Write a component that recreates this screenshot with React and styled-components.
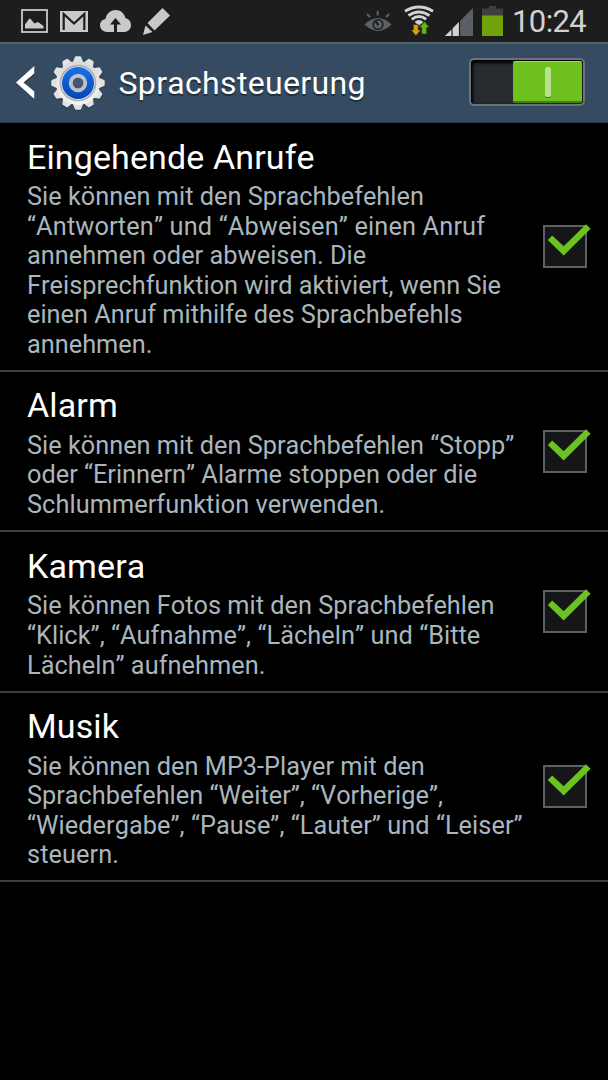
import React, { useState } from "react";
import styled, { createGlobalStyle } from "styled-components";

const settings = [
  {
    title: "Eingehende Anrufe",
    lines: [
      { text: "Sie können mit den Sprachbefehlen" },
      { text: "“Antworten” und “Abweisen” einen Anruf", tracking: 0.16 },
      { text: "annehmen oder abweisen. Die", tracking: 0.05 },
      { text: "Freisprechfunktion wird aktiviert, wenn Sie" },
      { text: "einen Anruf mithilfe des Sprachbefehls" },
      { text: "annehmen." },
    ],
    height: 249,
  },
  {
    title: "Alarm",
    lines: [
      { text: "Sie können mit den Sprachbefehlen “Stopp”" },
      { text: "oder “Erinnern” Alarme stoppen oder die" },
      { text: "Schlummerfunktion verwenden.", tracking: 0.07 },
    ],
    height: 160,
  },
  {
    title: "Kamera",
    lines: [
      { text: "Sie können Fotos mit den Sprachbefehlen" },
      { text: "“Klick”, “Aufnahme”, “Lächeln” und “Bitte", tracking: 0.06 },
      { text: "Lächeln” aufnehmen.", tracking: 0.05 },
    ],
    height: 161,
  },
  {
    title: "Musik",
    lines: [
      { text: "Sie können den MP3-Player mit den" },
      { text: "Sprachbefehlen “Weiter”, “Vorherige”," },
      { text: "“Wiedergabe”, “Pause”, “Lauter” und “Leiser”", tracking: 0.06 },
      { text: "steuern.", tracking: 0.1 },
    ],
    height: 189,
  },
];

const PictureIcon = () => (
  <svg width="27" height="24" viewBox="0 0 27 24">
    <rect x="1" y="1" width="25" height="22" fill="none" stroke="#c9c9c9" strokeWidth="1.8" />
    <path
      d="M4 19.500V15.500L8 10Q9 9 10 10.500L13.500 14.500L17 13L22.500 17V19.500Z"
      fill="#c9c9c9"
    />
  </svg>
);

const MailIcon = () => (
  <svg width="28" height="21" viewBox="0 0 28 21">
    <rect width="28" height="21" fill="#c9c9c9" />
    <path d="M3.700 19V3L14 12.500L24.300 3V19" fill="none" stroke="#1d1d1d" strokeWidth="2.200" />
  </svg>
);

const CloudIcon = () => (
  <svg width="31" height="22" viewBox="0 0 31 22">
    <path
      d="M7.500 22C3 22 0 19 0 15.300C0 12 2.300 9.500 5.500 9C6.500 3.500 10.500 0 15.500 0C20.500 0 24.500 3.500 25.300 8C28.800 9 31 11.600 31 15C31 19 28 22 24 22Z"
      fill="#c9c9c9"
    />
    <path d="M15.500 8L21 14.500H17V22H14V14.500H10Z" fill="#1d1d1d" />
  </svg>
);

const PencilIcon = () => (
  <svg width="27" height="27" viewBox="0 0 27 27">
    <path d="M19.500 0L27 7.500L11.500 22.500L4.500 15Z" fill="#c9c9c9" />
    <path d="M2.500 17.500L9.500 24L0 27Z" fill="#c9c9c9" />
  </svg>
);

const EyeIcon = () => (
  <svg width="28" height="21" viewBox="0 0 28 21">
    <path d="M0.500 13.500Q14 0.500 27.500 13.500Q14 26.500 0.500 13.500Z" fill="#5b6167" />
    <circle cx="14" cy="13.500" r="4.800" fill="#5b6167" stroke="#1d1d1d" strokeWidth="1.600" />
    <path d="M14.500 14L11.500 10.500" stroke="#1d1d1d" strokeWidth="2.200" />
    <path d="M3 3L6 6M13.700 0V4.500M25 3L22 6" stroke="#5b6167" strokeWidth="2" />
  </svg>
);

const WifiIcon = () => (
  <svg width="30" height="31" viewBox="0 0 30 31">
    <g fill="none" stroke="#d2d2d2" strokeWidth="2.900">
      <path d="M1 6.300Q15 -2.200 29 6.300" />
      <path d="M4.500 10.500Q15 3.300 25.500 10.500" />
      <path d="M7.800 14.300Q15 8.800 22.200 14.300" />
    </g>
    <path d="M10.500 17Q15 12.800 19.500 17L15 20.500Z" fill="#d2d2d2" />
    <path
      d="M9.300 19.500H14.300V25H17L11.800 30.800L7 25H9.300Z"
      fill="#d59d13"
      stroke="#1d1d1d"
      strokeWidth="0.500"
    />
    <path
      d="M20.500 16.500L25.500 22.500H22.700V29H17.700V22.500H15.200Z"
      fill="#68b418"
      stroke="#1d1d1d"
      strokeWidth="0.500"
    />
  </svg>
);

const SignalIcon = () => (
  <svg width="28" height="28" viewBox="0 0 28 28">
    <path d="M0 28L28 0V28Z" fill="#5b5f63" />
    <path d="M0 28L14.500 13.500V28Z" fill="#d2d2d2" />
    <path d="M7 14V28M14.500 10V28" stroke="#1d1d1d" strokeWidth="1.200" />
  </svg>
);

const BatteryIcon = () => (
  <svg width="21" height="30" viewBox="0 0 21 30">
    <path d="M7 0H14V2.500H21V30H0V2.500H7Z" fill="#3d3f41" />
    <rect y="9.500" width="21" height="20.500" fill="#73a30b" />
  </svg>
);

const BackIcon = () => (
  <svg width="20" height="34" viewBox="0 0 20 34">
    <path d="M19 2V9L8.500 18L19 27V34L0.500 18Z" fill="#1e2c39" opacity="0.500" />
    <path d="M18.300 0V7.500L7.500 16.500L18.300 25.500V33L0 16.500Z" fill="#fff" />
  </svg>
);

const teeth = [0, 30, 60, 90, 120, 150, 180, 210, 240, 270, 300, 330];

const GearIcon = () => (
  <svg width="56" height="56" viewBox="-28 -28 56 56">
    <defs>
      <linearGradient id="metal" x1="0" y1="0" x2="0" y2="1">
        <stop offset="0" stopColor="#d9d9d9" />
        <stop offset="1" stopColor="#f3f3f3" />
      </linearGradient>
      <linearGradient id="blue" x1="0" y1="0" x2="0" y2="1">
        <stop offset="0" stopColor="#1871ea" />
        <stop offset="1" stopColor="#0346b4" />
      </linearGradient>
    </defs>
    <g fill="#27394a" opacity="0.500" transform="translate(0 1)">
      {teeth.map((a) => (
        <path key={a} transform={`rotate(${a})`} d="M-5.500 -20L-3.200 -27H3.200L5.500 -20Z" />
      ))}
    </g>
    <g fill="#e2e2e2">
      {teeth.map((a) => (
        <path
          key={a}
          transform={`rotate(${a})`}
          d="M-5.500 -20L-3.300 -25.500Q-3 -26.700 -2 -26.700H2Q3 -26.700 3.300 -25.500L5.500 -20Z"
        />
      ))}
    </g>
    <circle r="22" fill="url(#metal)" />
    <circle r="17.500" fill="none" stroke="#a9afb3" strokeWidth="1.600" />
    <circle r="16" fill="url(#blue)" />
    <circle r="7.200" fill="none" stroke="#b9c2cb" strokeWidth="4" />
    <circle r="5.200" fill="#46586a" />
  </svg>
);

const CheckMark = () => (
  <Mark width="48" height="48" viewBox="0 0 48 48">
    <path d="M4.800 19L9.200 14.600L20.700 25.200L43 3.200L47.600 7.800L20.700 34.500Z" fill="#6cc21f" />
  </Mark>
);

const App = () => {
  const [enabled, setEnabled] = useState(true);
  const [checked, setChecked] = useState(settings.map(() => true));

  const toggle = (index) => {
    setChecked(checked.map((value, i) => (i === index ? !value : value)));
  };

  return (
    <Screen>
      <GlobalStyle />
      <StatusBar>
        <Notifications>
          <PictureIcon />
          <MailIcon />
          <CloudIcon />
          <PencilIcon />
        </Notifications>
        <SystemIcons>
          <EyeIcon />
          <WifiIcon />
          <SignalIcon />
          <BatteryIcon />
          <Clock>10:24</Clock>
        </SystemIcons>
      </StatusBar>
      <Header>
        <BackIcon />
        <GearIcon />
        <HeaderTitle>Sprachsteuerung</HeaderTitle>
        <Switch onClick={() => setEnabled(!enabled)} $on={enabled}>
          <Thumb />
        </Switch>
      </Header>
      {settings.map((item, index) => (
        <Row key={item.title} $height={item.height} onClick={() => toggle(index)}>
          <TextBlock>
            <Title>{item.title}</Title>
            {item.lines.map((line) => (
              <Line key={line.text} $tracking={line.tracking}>
                {line.text}
              </Line>
            ))}
          </TextBlock>
          <Checkbox>{checked[index] && <CheckMark />}</Checkbox>
        </Row>
      ))}
    </Screen>
  );
};

const GlobalStyle = createGlobalStyle`
  * {
    box-sizing: border-box;
  }

  body {
    margin: 0;
    background: #000;
    font-family: Roboto, sans-serif;
    font-kerning: none;
  }

  svg {
    display: block;
    flex-shrink: 0;
  }
`;

const Screen = styled.div`
  width: 608px;
  height: 1080px;
  overflow: hidden;
  background: #000;
`;

const StatusBar = styled.div`
  display: flex;
  justify-content: space-between;
  height: 42px;
  padding: 0 22px 0 21px;
  background: #1d1d1d;
`;

const Notifications = styled.div`
  display: flex;
  align-items: center;
  gap: 12px;
`;

const SystemIcons = styled.div`
  display: flex;
  align-items: flex-end;
  padding-bottom: 6px;

  svg:nth-child(1) {
    margin: 0 12px 4px 0;
  }

  svg:nth-child(2) {
    margin-right: 11px;
  }

  svg:nth-child(3) {
    margin-right: 9px;
  }
`;

const Clock = styled.div`
  width: 74px;
  margin: 0 0 -1px 9px;
  font-size: 31px;
  line-height: 31px;
  letter-spacing: -0.6px;
  color: #d2d2d2;
  white-space: nowrap;
`;

const Header = styled.div`
  display: flex;
  align-items: center;
  height: 81px;
  padding: 0 23px 0 16px;
  border-top: 2px solid #55636f;
  border-bottom: 1px solid #283b4c;
  background: #354b61;

  svg:nth-child(2) {
    margin-left: 14px;
  }
`;

const HeaderTitle = styled.div`
  flex: 1;
  margin-left: 12.5px;
  font-size: 32px;
  letter-spacing: 0.33px;
  color: #fff;
  text-shadow: 0 2px 1px rgba(0, 0, 0, 0.4);
  white-space: nowrap;
`;

const Switch = styled.div`
  display: flex;
  justify-content: ${(props) => (props.$on ? "flex-end" : "flex-start")};
  width: 116px;
  height: 48px;
  margin-top: -2px;
  padding: 1px 1px 0 0;
  border: 2px solid #6b747b;
  border-radius: 5px;
  background: #262b2f;
  box-shadow: inset 1px 2px 3px 1px #000;
`;

const Thumb = styled.div`
  display: flex;
  align-items: center;
  justify-content: center;
  width: 69px;
  height: 42px;
  border-top: 1px solid #a0dd6b;
  border-bottom: 2px solid #438212;
  border-radius: 2px;
  background: #6dc01e;

  &::after {
    content: "";
    width: 6px;
    height: 30px;
    border-radius: 2px;
    background: #b9e08f;
    box-shadow: 0 1px 0 #3f7912;
  }
`;

const Row = styled.div`
  display: flex;
  align-items: center;
  justify-content: space-between;
  height: ${(props) => props.$height}px;
  padding: 0 21px 0 27px;
  border-bottom: 2px solid #3d3d3d;
`;

const TextBlock = styled.div`
  width: 500px;
  padding-top: 3px;
`;

const Title = styled.div`
  margin-bottom: 5.5px;
  font-size: 34px;
  line-height: 40px;
  letter-spacing: 0.12px;
  color: #fff;
`;

const Line = styled.div`
  font-size: 25.3px;
  line-height: 29.55px;
  letter-spacing: ${(props) => props.$tracking || 0.01}px;
  color: #a9b6bd;
  white-space: nowrap;
`;

const Checkbox = styled.div`
  position: relative;
  width: 44px;
  height: 43px;
  border: 2px solid #5d6164;
  background: #141617;
`;

const Mark = styled.svg`
  position: absolute;
  top: -6px;
  left: -2px;
`;

export default App;
